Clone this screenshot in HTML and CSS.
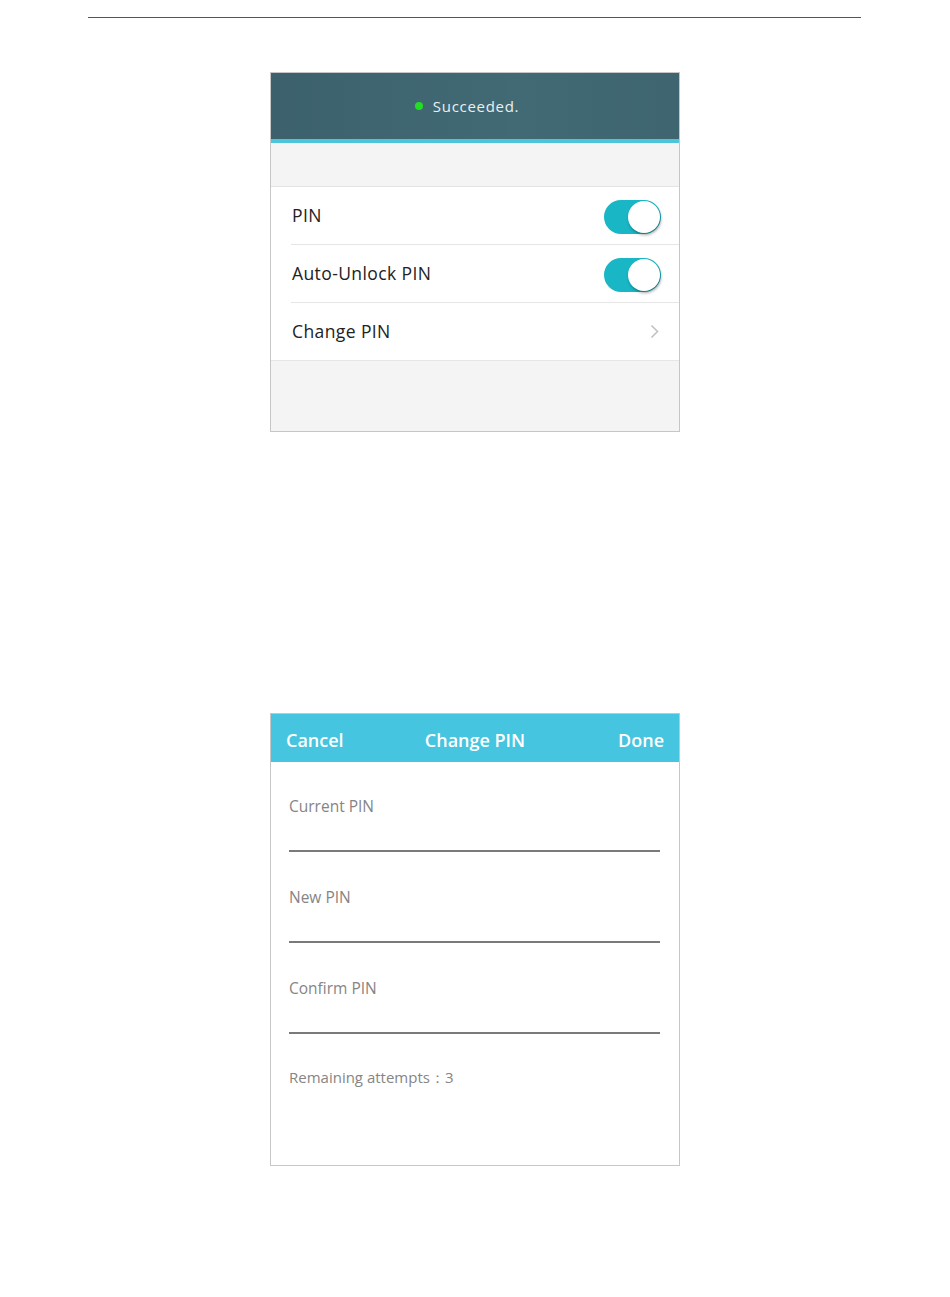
FILE: index.html
```html
<!DOCTYPE html>
<html>
<head>
  <meta http-equiv="Content-type" content="text/html; charset=utf-8">
  <title>PIN Settings</title>
  <link rel="stylesheet" href="styles.css">
</head>
<body>
  <div class="rule"></div>

  <div class="screen screen_pin">
    <div class="toast">
      <span class="dot"></span>
      <span class="toast_text">Succeeded.</span>
    </div>
    <div class="stripe"></div>
    <div class="spacer_top"></div>
    <div class="list">
      <div class="row">
        <span class="row_label">PIN</span>
        <span class="toggle"><span class="knob"></span></span>
      </div>
      <div class="row">
        <span class="row_label">Auto-Unlock PIN</span>
        <span class="toggle"><span class="knob"></span></span>
      </div>
      <div class="row row_last">
        <span class="row_label">Change PIN</span>
        <svg class="chevron" width="9" height="15" viewBox="0 0 9 15">
          <path d="M1.5 1.5 L7.5 7.5 L1.5 13.5" fill="none" stroke="#c2c2c6" stroke-width="1.6"/>
        </svg>
      </div>
    </div>
    <div class="spacer_bottom"></div>
  </div>

  <div class="screen screen_change">
    <div class="navbar">
      <span class="nav_btn nav_left">Cancel</span>
      <span class="nav_title">Change PIN</span>
      <span class="nav_btn nav_right">Done</span>
    </div>
    <div class="form">
      <div class="field">
        <p class="field_label">Current PIN</p>
        <div class="field_input"></div>
      </div>
      <div class="field">
        <p class="field_label">New PIN</p>
        <div class="field_input"></div>
      </div>
      <div class="field">
        <p class="field_label">Confirm PIN</p>
        <div class="field_input"></div>
      </div>
      <p class="attempts">Remaining attempts：3</p>
    </div>
  </div>
</body>
</html>
```

FILE: styles.css
```css
body {
  margin: 0;
  background-color: #ffffff;
  font-family: "Open Sans", "Liberation Sans", Arial, sans-serif;
  color: #222222;
  display: flex;
  flex-direction: column;
  align-items: center;
}
.rule {
  width: 773px;
  height: 1px;
  background-color: #555555;
  margin-top: 17px;
  margin-left: -1px;
}
.screen {
  width: 408px;
  border: 1px solid #c6c6c6;
  background-color: #ffffff;
}
.screen_pin {
  margin-top: 54px;
}
.screen_change {
  margin-top: 281px;
}

/* first screen */
.toast {
  height: 66px;
  background: linear-gradient(90deg, #3c616c, #416a75 60%, #3e6570);
  display: flex;
  align-items: center;
  justify-content: center;
  gap: 10px;
  padding-right: 16px;
}
.dot {
  width: 8px;
  height: 8px;
  border-radius: 50%;
  background-color: #22dd22;
}
.toast_text {
  color: #e8f0f2;
  font-size: 15px;
  letter-spacing: 0.7px;
}
.stripe {
  height: 4px;
  background-color: #4cc4da;
}
.spacer_top {
  height: 43px;
  background-color: #f4f4f4;
  border-bottom: 1px solid #e4e4e4;
}
.list {
  background-color: #ffffff;
}
.row {
  height: 57px;
  margin-left: 20px;
  padding-right: 18px;
  border-bottom: 1px solid #e6e6e6;
  display: flex;
  align-items: center;
  justify-content: space-between;
}
.row_last {
  margin-left: 0;
  padding-left: 20px;
}
.row_label {
  font-size: 17.5px;
  letter-spacing: 0.4px;
  color: #222222;
  padding-left: 1px;
  margin-top: -2px;
}
.toggle {
  position: relative;
  width: 57px;
  height: 34px;
  border-radius: 17px;
  background-color: #19b6c6;
  margin-top: 2px;
}
.knob {
  position: absolute;
  right: 1px;
  top: 1px;
  width: 32px;
  height: 32px;
  border-radius: 50%;
  background-color: #ffffff;
  box-shadow: 1px 2px 3px rgba(0, 0, 0, 0.35);
}
.chevron {
  margin-right: 2px;
}
.spacer_bottom {
  height: 70px;
  background-color: #f4f4f4;
}

/* second screen */
.navbar {
  height: 45px;
  background-color: #45c5e0;
  display: grid;
  grid-template-columns: 1fr auto 1fr;
  align-items: center;
  padding: 3px 15px 0 15px;
  color: #ffffff;
  font-size: 18px;
  font-weight: 600;
}
.nav_right {
  text-align: right;
}
.form {
  padding: 34px 19px 78px 18px;
}
.field {
  margin-bottom: 35px;
}
.field_label {
  margin: 0;
  font-size: 15.5px;
  line-height: 20px;
  color: #858585;
}
.field_input {
  height: 34px;
  border-bottom: 2px solid #7a7a7a;
}
.attempts {
  margin: -2px 0 0 0;
  font-size: 15px;
  line-height: 20px;
  color: #858585;
}
```
